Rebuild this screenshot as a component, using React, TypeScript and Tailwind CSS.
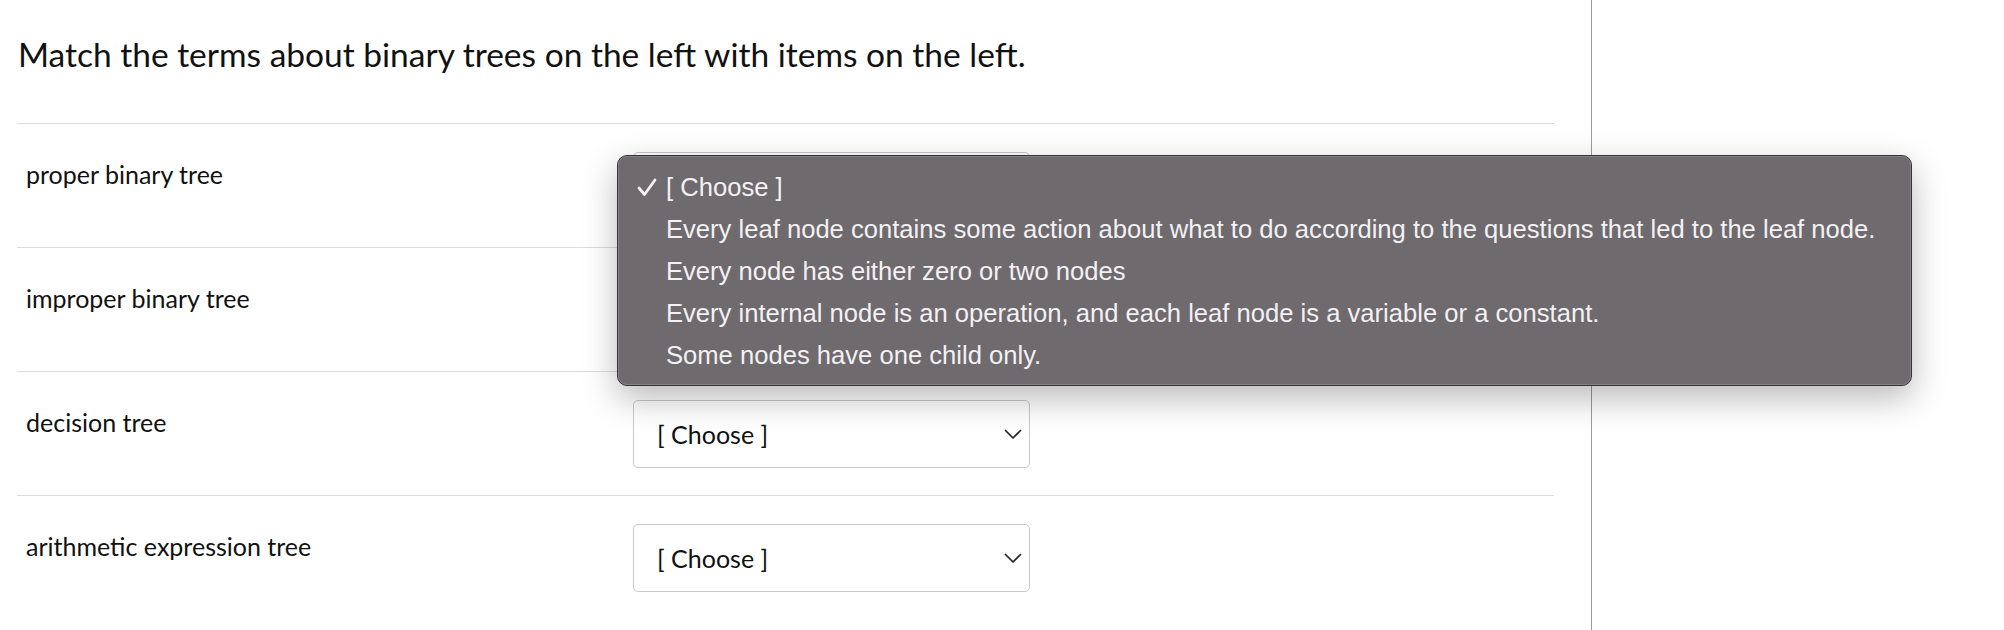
import React from "react";

const rows = [
  "proper binary tree",
  "improper binary tree",
  "decision tree",
  "arithmetic expression tree",
];

const options = [
  "Every leaf node contains some action about what to do according to the questions that led to the leaf node.",
  "Every node has either zero or two nodes",
  "Every internal node is an operation, and each leaf node is a variable or a constant.",
  "Some nodes have one child only.",
];

function Chevron() {
  return (
    <svg width="18" height="11" viewBox="0 0 18 11" fill="none" className="shrink-0">
      <path d="M1.5 1.5 L9 9 L16.5 1.5" stroke="#222" strokeWidth="1.7" strokeLinecap="round" strokeLinejoin="round" />
    </svg>
  );
}

function Select() {
  return (
    <div className="flex h-[68px] w-[397px] items-center justify-between rounded-[5px] border border-[#c9c9c9] bg-white pl-[23px] pr-[7px]">
      <span className="text-[25px] leading-[36px] text-[#111]">[ Choose ]</span>
      <Chevron />
    </div>
  );
}

export default function App() {
  return (
    <div className="relative flex h-[630px] w-[2004px] overflow-hidden bg-white font-['Lato','Noto_Sans',sans-serif] text-[#111]">
      <main className="w-[1591px] shrink-0 pl-[17px] pr-[37px]">
        <h1 className="pt-[30px] pl-[1px] text-[33.5px] leading-[48px] font-normal text-[#111]">
          Match the terms about binary trees on the left with items on the left.
        </h1>
        <div className="mt-[45px]">
          {rows.map((r) => (
            <div key={r} className="flex items-start border-t border-[#dcdcdc] pt-[28px] pb-[27px]">
              <div className="w-[616px] shrink-0 pl-[9px] pt-[4px] text-[25px] leading-[36px]">{r}</div>
              <Select />
            </div>
          ))}
        </div>
      </main>
      <div className="h-full w-px shrink-0 bg-[#9c9c9c]" />

      <div className="absolute left-[617px] top-[155px] h-[231px] w-[1295px] rounded-[10px] border border-[#353335] bg-[#6e6a6e] shadow-[0_12px_34px_rgba(0,0,0,0.28)]">
        <div className="h-full w-full rounded-[9px] border border-[#858185] pt-[9px] font-['Liberation_Sans',Arial,sans-serif] text-[25.6px] text-[#f3f1f3]">
          <div className="flex h-[42px] items-center">
            <svg width="20" height="19" viewBox="0 0 20 19" className="ml-[18px] mr-[9px] shrink-0">
              <path d="M2 10 L7.5 16.5 L18 2" stroke="#f3f1f3" strokeWidth="2.8" fill="none" strokeLinecap="round" strokeLinejoin="round" />
            </svg>
            <span>[ Choose ]</span>
          </div>
          {options.map((o) => (
            <div key={o} className="flex h-[42px] items-center pl-[47px]">
              <span>{o}</span>
            </div>
          ))}
        </div>
      </div>
    </div>
  );
}
